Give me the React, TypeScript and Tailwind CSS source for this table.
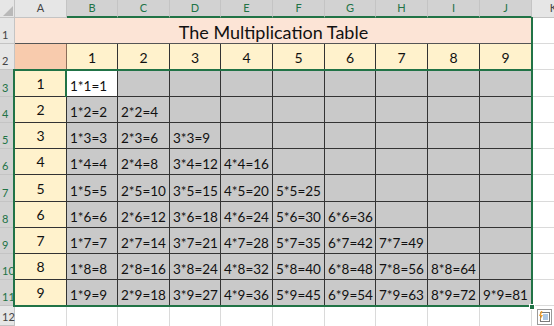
import React from 'react';

const COLS = ['A', 'B', 'C', 'D', 'E', 'F', 'G', 'H', 'I', 'J', 'K'];

/** Quick Analysis button that Excel shows under a selection. */
function QuickAnalysis() {
  return (
    <svg width="15" height="16" viewBox="0 0 15 16">
      <rect x="0.5" y="0.5" width="14" height="15" fill="#ffffff" stroke="#9a9a9a" />
      <rect x="3.5" y="3.5" width="9" height="9" fill="#ffffff" stroke="#7a7a7a" />
      <line x1="6" y1="6" x2="11" y2="6" stroke="#5b8fc9" strokeWidth="1" />
      <line x1="6" y1="8" x2="11" y2="8" stroke="#5b8fc9" strokeWidth="1" />
      <line x1="6" y1="10" x2="11" y2="10" stroke="#5b8fc9" strokeWidth="1" />
      <path d="M4 2 L2 7 L4 7 L2.5 12 L6 6 L4 6 L5.5 2 Z" fill="#f0a030" />
    </svg>
  );
}

function ColumnHeaders() {
  return (
    <>
      <div className="flex items-end justify-end border-r border-b border-[#c4c4c4] bg-[#e6e6e6] p-[1px]">
        <svg width="10" height="10" viewBox="0 0 10 10">
          <path d="M10 0 L10 10 L0 10 Z" fill="#b9b9b9" />
        </svg>
      </div>
      {COLS.map((c) => {
        const selected = c !== 'A' && c !== 'K';
        return (
          <div
            key={c}
            className={
              selected
                ? 'flex items-center justify-center border-r border-[#c4c4c4] border-b-2 border-b-[#217346] bg-[#d2d2d2] pt-[1px] text-[11px] text-[#217346]'
                : 'flex items-center justify-center border-r border-b border-[#c4c4c4] bg-[#e6e6e6] text-[11px] text-[#444444]'
            }
          >
            {c}
          </div>
        );
      })}
    </>
  );
}

function RowHeader({ n }: { n: number }) {
  const selected = n >= 3 && n <= 11;
  return (
    <div
      className={
        selected
          ? 'flex items-end border-r border-b border-[#c4c4c4] bg-[#d2d2d2] pl-[2px] pb-[2px] text-[11px] leading-[12px] text-[#217346]'
          : 'flex items-end border-r border-b border-[#c4c4c4] bg-[#e6e6e6] pl-[2px] pb-[2px] text-[11px] leading-[12px] text-[#444444]'
      }
    >
      {n}
    </div>
  );
}

export default function App() {
  const rows = [1, 2, 3, 4, 5, 6, 7, 8, 9];

  return (
    <div className="relative h-[326px] w-[554px] overflow-hidden bg-white font-['Lato','Liberation_Sans',sans-serif] text-[#111111]">
      <div className="grid grid-cols-[15px_52px_51px_52px_51px_52px_52px_51px_52px_52px_52px_44px] grid-rows-[18px_26px_26px_27px_26px_26px_26px_27px_26px_26px_26px_26px_20px]">
        <ColumnHeaders />

        {/* row 1: merged title */}
        <RowHeader n={1} />
        <div className="col-span-10 flex items-center justify-center border-b border-[#555555] bg-[#fce4d6] pt-[3px] text-[18px]">
          The Multiplication Table
        </div>
        <div className="border-b border-[#dadada]" />

        {/* row 2: column numbers */}
        <RowHeader n={2} />
        <div className="border-r border-b border-[#8a6d5a] bg-[#f8cbad]" />
        {rows.map((c) => (
          <div
            key={c}
            className="flex items-center justify-center border-r border-b border-[#333333] bg-[#fff2cc] pt-[2px] text-[14px]"
          >
            {c}
          </div>
        ))}
        <div className="border-b border-[#dadada]" />

        {/* rows 3-11: products */}
        {rows.map((r) => (
          <React.Fragment key={r}>
            <RowHeader n={r + 2} />
            <div className="flex items-center justify-center border-r border-b border-[#333333] bg-[#fff2cc] text-[14px]">
              {r}
            </div>
            {rows.map((c) => (
              <div
                key={c}
                className={
                  r === 1 && c === 1
                    ? 'flex items-end border-r border-b border-[#333333] bg-white pl-[3px] pb-[2px] text-[13.5px] leading-[16px]'
                    : 'flex items-end border-r border-b border-[#333333] bg-[#c9c9c9] pl-[3px] pb-[2px] text-[13.5px] leading-[16px]'
                }
              >
                {c <= r ? `${c}*${r}=${c * r}` : ''}
              </div>
            ))}
            <div className="border-b border-[#dadada]" />
          </React.Fragment>
        ))}

        {/* row 12 */}
        <RowHeader n={12} />
        {COLS.map((c) => (
          <div key={c} className="border-r border-[#dadada]" />
        ))}
      </div>

      {/* selection outline */}
      <div className="pointer-events-none absolute left-[13px] top-[69px] h-[238px] w-[520px] border-2 border-[#217346]" />
      <div className="pointer-events-none absolute left-[531px] top-[17px] h-[53px] w-[2px] bg-[#217346]" />
      <div className="pointer-events-none absolute left-[65px] top-[70px] h-[27px] w-[2px] bg-[#217346]" />
      <div className="pointer-events-none absolute left-[529px] top-[304px] h-[6px] w-[6px] border border-white bg-[#217346]" />
      <div className="absolute left-[537px] top-[309px]">
        <QuickAnalysis />
      </div>
    </div>
  );
}
